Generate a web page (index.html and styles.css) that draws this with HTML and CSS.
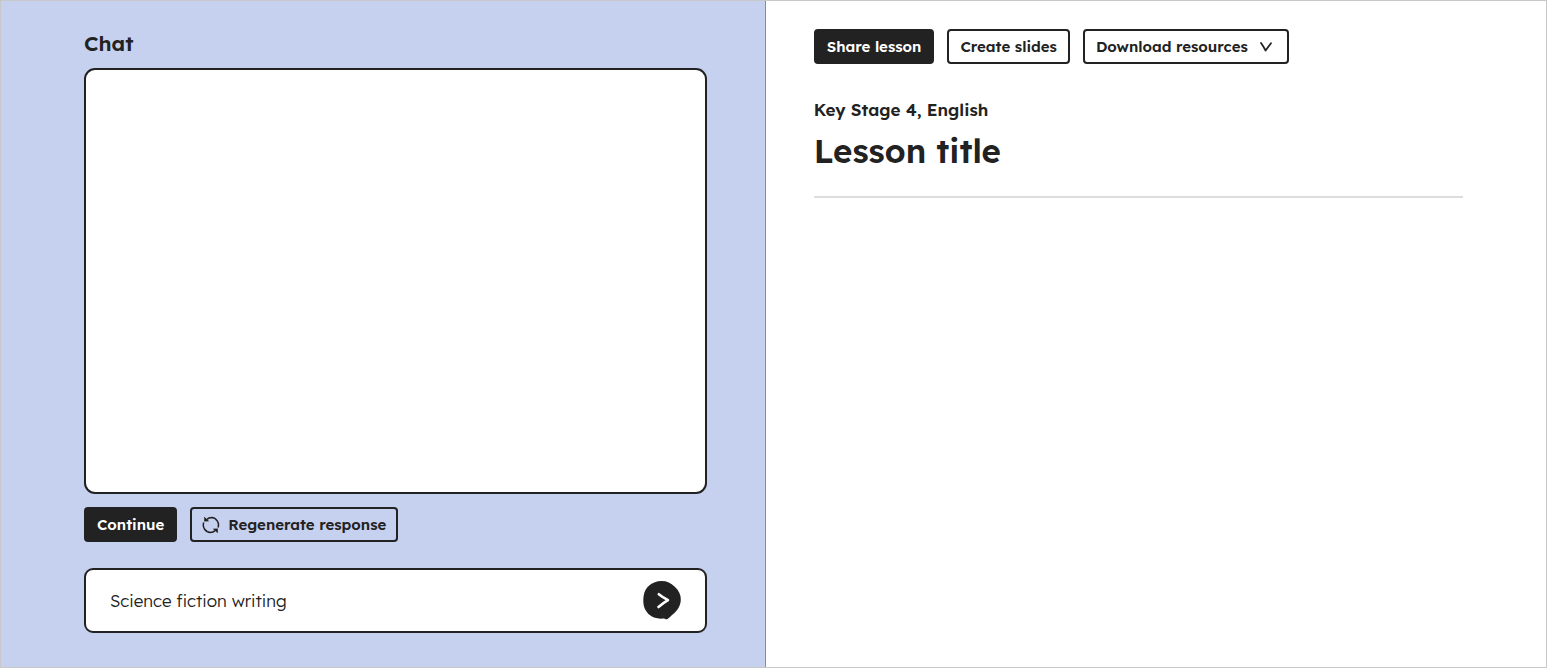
FILE: index.html
```html
<!DOCTYPE html>
<html lang="en">
<head>
<meta charset="utf-8">
<meta name="viewport" content="width=device-width, initial-scale=1">
<title>Lesson title</title>
<link rel="stylesheet" href="styles.css">
</head>
<body>
<div class="app">
  <section class="chat" aria-labelledby="chat-heading">
    <h2 class="chat-title" id="chat-heading">Chat</h2>
    <div class="messages" role="log"></div>
    <div class="actions chat-actions">
      <button class="button button-dark" type="button">Continue</button>
      <button class="button button-icon" type="button">
        <svg class="refresh" viewBox="0 0 18 18" aria-hidden="true">
          <path d="M5 3.400Q6.800 1.600 9.500 1.600A7.400 7.400 0 0 1 16 11.500M1.700 6.600A7.400 7.400 0 0 0 8.500 16.400Q11.200 16.400 13 14.600" fill="none" stroke="currentColor" stroke-width="1.500"/>
          <path d="M2.200 0.800 2.200 5.600 7.200 5.200ZM15.800 17.200 15.800 12.400 10.800 12.800Z" fill="currentColor"/>
        </svg>
        <span>Regenerate response</span>
      </button>
    </div>
    <form class="composer">
      <input class="prompt" type="text" aria-label="Message" value="Science fiction writing">
      <button class="send" type="button" aria-label="Send message">
        <svg viewBox="0 0 38 39" aria-hidden="true">
          <path d="M18.500 0C24 0 28 2 31.500 5.500C36 9.500 38 14 37.800 19C37.500 25 34.500 30 29 34C27.500 35.500 26 37 24.500 38C23 39 22 37.600 20.500 37.600C12 38.200 6 35 2.800 29.500C0 25 0 19 0.700 14.500C2 6 9 0.300 18.500 0Z" fill="#222"/>
          <path d="M15.800 13.200C19 15.700 22 17.500 25 19.200C21.500 21.200 18.800 23.300 15.500 26" fill="none" stroke="#fff" stroke-width="2.600" stroke-linecap="round" stroke-linejoin="round"/>
        </svg>
      </button>
    </form>
  </section>
  <main class="lesson">
    <div class="actions">
      <button class="button button-dark" type="button">Share lesson</button>
      <button class="button" type="button">Create slides</button>
      <button class="button button-menu" type="button" aria-haspopup="menu">
        <span>Download resources</span>
        <svg class="chevron" viewBox="0 0 12 10" aria-hidden="true">
          <path d="M1 1Q3.500 4.500 5.600 8.500Q8.500 4.500 11 1.300" fill="none" stroke="currentColor" stroke-width="1.800" stroke-linecap="round" stroke-linejoin="round"/>
        </svg>
      </button>
    </div>
    <header class="lesson-header">
      <p class="subject">Key Stage 4, English</p>
      <h1 class="lesson-title">Lesson title</h1>
    </header>
  </main>
</div>
</body>
</html>
```
FILE: styles.css
```css
* {
  box-sizing: border-box;
}

body {
  margin: 0;
  background: #fff;
  color: #222;
  font-family: Lexend, Inter, sans-serif;
  font-size: 15px;
}

.app {
  display: grid;
  grid-template-columns: 49.5% 1fr;
  min-height: 100vh;
  border: 1px solid #c8c8c8;
}

.chat {
  display: flex;
  flex-direction: column;
  padding: 28px 58px 34px 83px;
  background: #c6d0ef;
  border-right: 1px solid #8a8d96;
}

.chat-title {
  margin: 0 0 11px;
  font-size: 21px;
  font-weight: 600;
  line-height: 28px;
}

.messages {
  flex: 1;
  min-height: 160px;
  background: #fff;
  border: 2px solid #222;
  border-radius: 11px;
}

.actions {
  display: flex;
  flex-wrap: wrap;
  gap: 13px;
}

.chat-actions {
  margin: 13px 0 26px;
}

.button {
  display: inline-flex;
  align-items: center;
  height: 35px;
  padding: 0 11px;
  border: 2px solid #222;
  border-radius: 4px;
  background: transparent;
  color: #222;
  font: inherit;
  font-weight: 600;
  white-space: nowrap;
  cursor: pointer;
}

.button-dark {
  background: #222;
  color: #fff;
}

.button-icon {
  gap: 8px;
  padding: 0 10px;
}

.button-menu {
  gap: 12px;
  padding-right: 15px;
}

.refresh {
  width: 18px;
  height: 18px;
}

.chevron {
  width: 12px;
  height: 10px;
}

.composer {
  display: flex;
  align-items: center;
  height: 65px;
  padding: 0 24px;
  background: #fff;
  border: 2px solid #222;
  border-radius: 9px;
}

.prompt {
  flex: 1;
  min-width: 0;
  padding: 0;
  border: 0;
  outline: 0;
  background: transparent;
  color: #222;
  font: inherit;
  font-size: 17px;
  font-weight: 300;
}

.send {
  display: flex;
  width: 38px;
  height: 39px;
  padding: 0;
  border: 0;
  background: none;
  cursor: pointer;
}

.lesson {
  padding: 28px 83px 28px 48px;
}

.lesson-header {
  margin-top: 34px;
  padding-bottom: 22px;
  border-bottom: 2px solid #ddd;
}

.subject {
  margin: 0;
  font-size: 17px;
  font-weight: 600;
  line-height: 24px;
}

.lesson-title {
  margin: 6px 0 0;
  font-size: 33px;
  font-weight: 600;
  line-height: 46px;
}
```
